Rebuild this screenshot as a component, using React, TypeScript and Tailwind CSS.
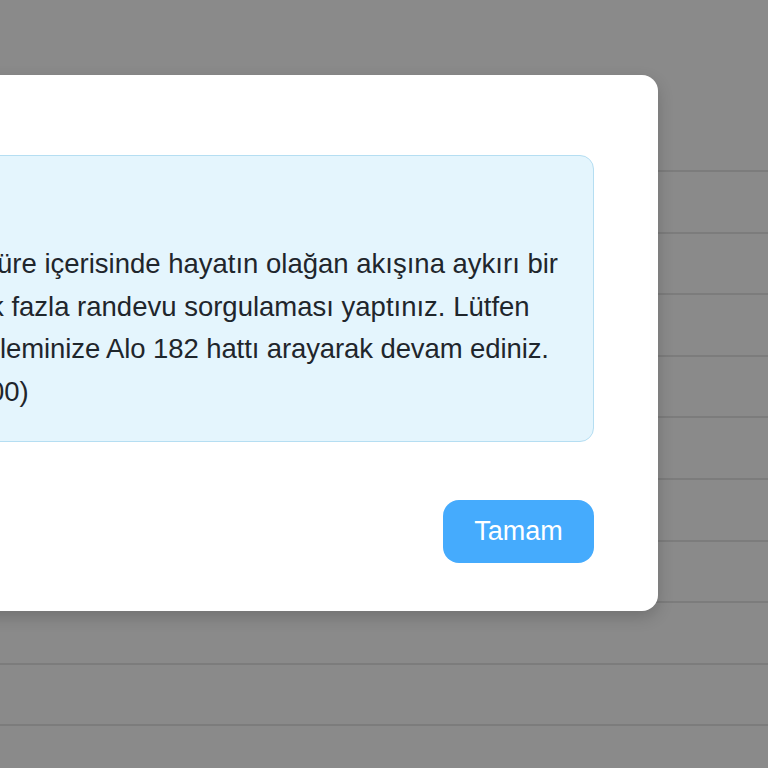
import React from "react";

const rows = Array.from({ length: 10 });

export default function App() {
  return (
    <div
      className="relative w-[768px] h-[768px] overflow-hidden bg-[#8a8a8a]"
      style={{ fontFamily: '"Liberation Sans", Arial, sans-serif' }}
    >
      {/* page behind overlay */}
      <div className="flex flex-col pt-[170px]">
        {rows.map((_, i) => (
          <div key={i} className="h-[61.6px] shrink-0 border-t-2 border-[#7c7c7c]" />
        ))}
      </div>

      {/* modal */}
      <div className="absolute left-[-100px] top-[75px] w-[758px] rounded-[16px] bg-white pt-[80px] pb-[48px] pl-[64px] pr-[64px] shadow-[0_6px_16px_rgba(0,0,0,0.18)]">
        <div className="h-[287px] rounded-[14px] border border-[#b5def2] bg-[#e4f5fd] pt-[87px] pl-[36px] text-[27.5px] leading-[42.5px] text-[#1f262c]">
          <div className="whitespace-nowrap ml-[-4px]">üre içerisinde hayatın olağan akışına aykırı bir</div>
          <div className="whitespace-nowrap ml-[-11px]">k fazla randevu sorgulaması yaptınız. Lütfen</div>
          <div className="whitespace-nowrap ml-[-1px] tracking-[-0.1px]">leminize Alo 182 hattı arayarak devam ediniz.</div>
          <div className="whitespace-nowrap ml-[-12px]">00)</div>
        </div>
        <div className="mt-[58px] flex justify-end">
          <button className="h-[63px] w-[151px] rounded-[16px] bg-[#45abfd] text-[27px] text-white">
            Tamam
          </button>
        </div>
      </div>
    </div>
  );
}
